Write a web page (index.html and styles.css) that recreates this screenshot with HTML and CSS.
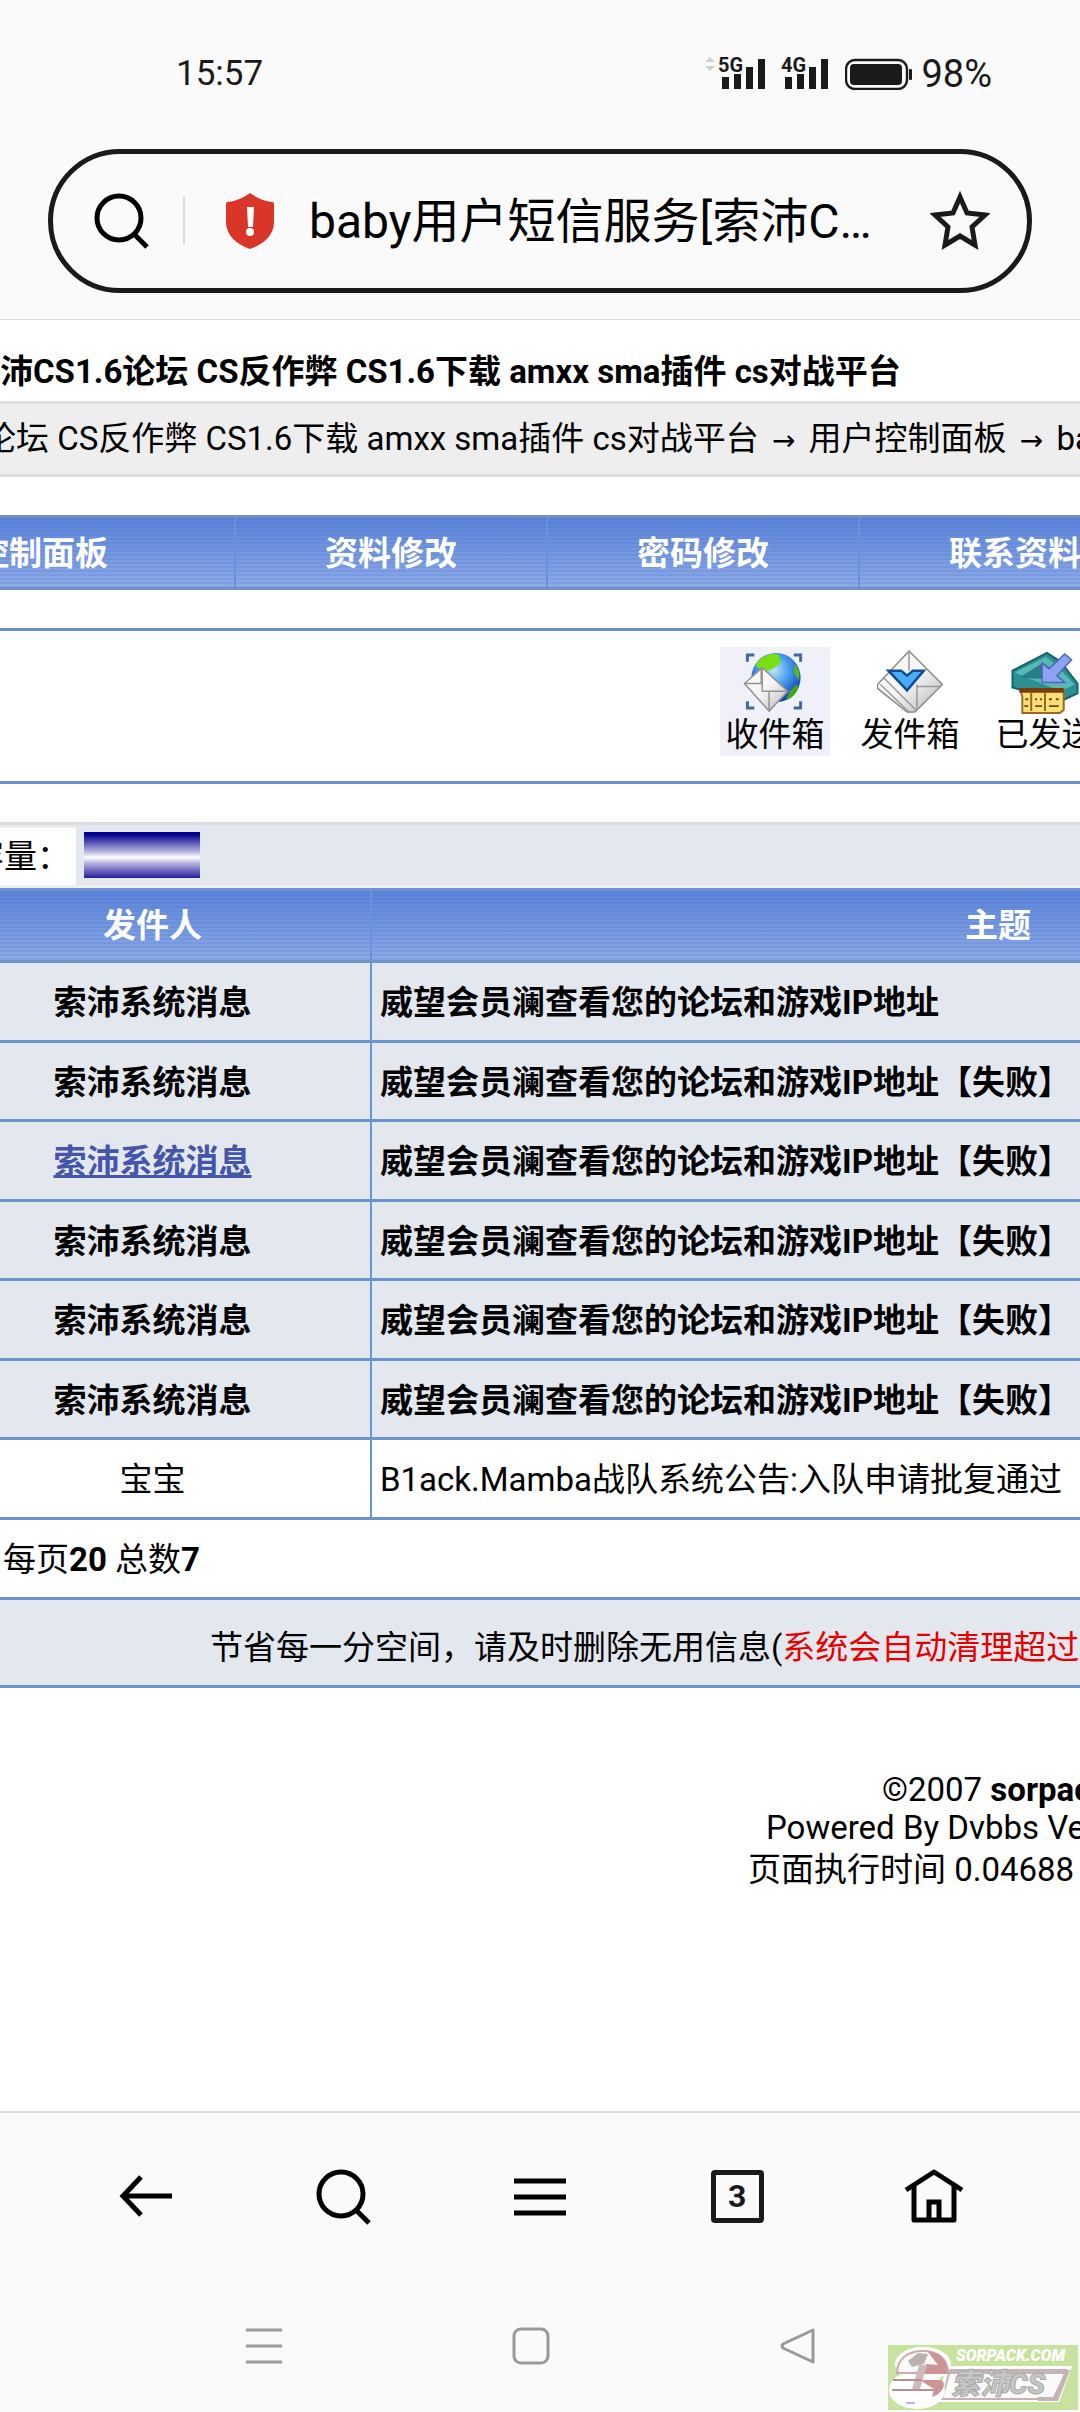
FILE: index.html
```html
<!DOCTYPE html>
<html lang="zh-CN">
<head>
    <meta charset="UTF-8">
    <meta name="viewport" content="width=device-width, initial-scale=1.0">
    <title>baby用户短信服务</title>
    <link rel="stylesheet" href="styles.css">
</head>
<body>
    <header class="browser-top">
        <div class="status-bar">
            <span class="clock">15:57</span>
            <div class="status-icons">
                <svg class="signal" width="62" height="36" viewBox="0 0 62 36">
                    <path d="M0 8l5-5 5 5zM0 12h10l-5 5z" fill="#d0d0d0"/>
                    <text x="13" y="18" class="net">5G</text>
                    <path d="M17 23h7v12h-7zM29 20h7v15h-7zM41 13h7v22h-7zM53 5h7v30h-7z" fill="#1a1a1a"/>
                </svg>
                <svg class="signal" width="50" height="36" viewBox="0 0 50 36">
                    <text x="0" y="18" class="net">4G</text>
                    <path d="M4 23h7v12h-7zM16 20h7v15h-7zM28 13h7v22h-7zM40 5h7v30h-7z" fill="#1a1a1a"/>
                </svg>
                <svg class="battery" width="68" height="36" viewBox="0 0 68 36">
                    <rect x="1" y="6" width="61" height="29" rx="9" fill="none" stroke="#1a1a1a" stroke-width="2.4"/>
                    <rect x="5" y="10" width="52" height="21" rx="4" fill="#1a1a1a"/>
                    <rect x="64" y="15" width="3" height="11" rx="1" fill="#1a1a1a"/>
                </svg>
                <span class="percent">98%</span>
            </div>
        </div>
        <form class="address-bar">
            <button type="button" class="icon-btn" aria-label="搜索">
                <svg width="56" height="56" viewBox="0 0 56 56" fill="none" stroke="#000" stroke-width="5">
                    <circle cx="25" cy="25" r="22"/>
                    <path d="M40 41l13 13"/>
                </svg>
            </button>
            <span class="divider"></span>
            <svg class="shield" width="50" height="56" viewBox="0 0 50 56">
                <path d="M25 0c7 5 14 8 22 9 2 0 2 1 2 3v17c0 13-10 22-24 27C11 51 1 42 1 29V12c0-2 0-3 2-3 8-1 15-4 22-9z" fill="#d93629"/>
                <path d="M22 14h7l-1 20h-5z" fill="#fff"/>
                <circle cx="25" cy="39" r="4" fill="#fff"/>
            </svg>
            <input class="address" type="text" aria-label="网址" value="baby用户短信服务[索沛C…" readonly>
            <button type="button" class="icon-btn" aria-label="收藏">
                <svg width="60" height="60" viewBox="0 0 60 60" fill="none" stroke="#1a1a1a" stroke-width="5">
                    <path d="M30 6l7 16 18 2-13 12 3 18-15-9-15 9 3-18L5 24l18-2z"/>
                </svg>
            </button>
        </form>
    </header>

    <main class="forum">
        <h1 class="site-title">沛CS1.6论坛 CS反作弊 CS1.6下载 amxx sma插件 cs对战平台</h1>
        <div class="crumbs">论坛 CS反作弊 CS1.6下载 amxx sma插件 cs对战平台 <span class="arrow">→</span> 用户控制面板 <span class="arrow">→</span> baby</div>

        <nav class="panel-nav">
            <a href="#" class="first">控制面板</a>
            <a href="#">资料修改</a>
            <a href="#">密码修改</a>
            <a href="#">联系资料</a>
        </nav>

        <div class="mail-boxes">
            <a href="#" class="mail-box active">
                <svg width="66" height="66" viewBox="0 0 66 66">
                    <defs>
                        <radialGradient id="globe" cx="45%" cy="35%" r="65%">
                            <stop offset="0" stop-color="#bfe4fb"/>
                            <stop offset=".45" stop-color="#4da3ee"/>
                            <stop offset="1" stop-color="#0b3fb0"/>
                        </radialGradient>
                        <linearGradient id="paper" x1="0" y1="0" x2="1" y2="1">
                            <stop offset="0" stop-color="#ffffff"/>
                            <stop offset=".5" stop-color="#f4f4f4"/>
                            <stop offset="1" stop-color="#b4b4b4"/>
                        </linearGradient>
                    </defs>
                    <path d="M5 13V6h7M52 6h7v7M59 53v7h-7M12 60H5v-7" fill="none" stroke="#41699f" stroke-width="3"/>
                    <circle cx="34" cy="29" r="25" fill="url(#globe)"/>
                    <path d="M13 17C18 8 27 3 37 6l2 8-8 6-9 3z" fill="#7ade14"/>
                    <path d="M48 43l7-7 2 3c-3 7-7 11-13 13z" fill="#42a51c"/>
                    <path d="M53 15l5 8-1 9-5-8z" fill="#52b52a"/>
                    <path d="M2 35l18-16 26 24-19 20z" fill="url(#paper)" stroke="#929292" stroke-width="1.5"/>
                    <path d="M2 35h17V19M20 43h26M27 43v20M20 19v24" fill="none" stroke="#929292" stroke-width="1.5"/>
                </svg>
                <span>收件箱</span>
            </a>
            <a href="#" class="mail-box">
                <svg width="66" height="66" viewBox="0 0 66 66">
                    <path d="M0 36l32-34 34 34-28 28h-8L0 40z" fill="url(#paper)" stroke="#888" stroke-width="1.5"/>
                    <path d="M6 29l33 33M32 2v20M40 36v26M40 38h24M3 36l30 29" fill="none" stroke="#999" stroke-width="1.5"/>
                    <path d="M11 22h13l6 5 6-5h11L30 42z" fill="#49adf4" stroke="#154a96" stroke-width="2.5"/>
                </svg>
                <span>发件箱</span>
            </a>
            <a href="#" class="mail-box">
                <svg width="68" height="66" viewBox="0 0 68 66">
                    <path d="M1 22L36 4l14 9 17 22v10l-17 8L1 39z" fill="#2c8f92" stroke="#12646c" stroke-width="2"/>
                    <path d="M3 24l32-16 10 8 19 20-14 7z" fill="#57b8b4"/>
                    <path d="M8 29l24-15 7 5v12z" fill="#277e85"/>
                    <path d="M31 14l7 6L54 5l7 6-15 16 8 7H31z" fill="#8da3f2" stroke="#5062bd" stroke-width="1.5"/>
                    <path d="M9 41h44v21l-4 3H11V49z" fill="#ffdf78" stroke="#9a6822" stroke-width="2"/>
                    <path d="M8 42h45" stroke="#7c3a08" stroke-width="5"/>
                    <path d="M20 44v19M34 44v19" stroke="#9a6822" stroke-width="2"/>
                    <path d="M14 51h3M24 51h2M29 51h2M38 51h3M45 51h3M13 58h4M24 58h7M38 58h10" stroke="#6d4a14" stroke-width="2"/>
                </svg>
                <span>已发送</span>
            </a>
        </div>

        <div class="capacity">
            <span class="capacity-label">容量：</span>
            <span class="capacity-bar"></span>
        </div>

        <table class="messages">
            <thead>
                <tr><th class="sender">发件人</th><th class="subject">主题</th></tr>
            </thead>
            <tbody>
                <tr class="unread"><td class="sender"><a href="#">索沛系统消息</a></td><td><a href="#">威望会员澜查看您的论坛和游戏IP地址</a></td></tr>
                <tr class="unread"><td class="sender"><a href="#">索沛系统消息</a></td><td><a href="#">威望会员澜查看您的论坛和游戏IP地址【失败】</a></td></tr>
                <tr class="unread"><td class="sender"><a href="#" class="hover">索沛系统消息</a></td><td><a href="#">威望会员澜查看您的论坛和游戏IP地址【失败】</a></td></tr>
                <tr class="unread"><td class="sender"><a href="#">索沛系统消息</a></td><td><a href="#">威望会员澜查看您的论坛和游戏IP地址【失败】</a></td></tr>
                <tr class="unread"><td class="sender"><a href="#">索沛系统消息</a></td><td><a href="#">威望会员澜查看您的论坛和游戏IP地址【失败】</a></td></tr>
                <tr class="unread"><td class="sender"><a href="#">索沛系统消息</a></td><td><a href="#">威望会员澜查看您的论坛和游戏IP地址【失败】</a></td></tr>
                <tr><td class="sender"><a href="#">宝宝</a></td><td><a href="#">B1ack.Mamba战队系统公告:入队申请批复通过</a></td></tr>
            </tbody>
        </table>
        <div class="paging">每页<b>20</b> 总数<b>7</b></div>
        <div class="notice">节省每一分空间，请及时删除无用信息(<span class="warn">系统会自动清理超过</span></div>

        <footer class="copyright">
            <p class="owner">©2007 <b>sorpack</b></p>
            <p class="powered">Powered By Dvbbs Version</p>
            <p class="runtime">页面执行时间 0.04688</p>
        </footer>
    </main>

    <nav class="toolbar">
        <button type="button" class="icon-btn" aria-label="后退">
            <svg width="60" height="60" viewBox="0 0 60 60" fill="none" stroke="#000" stroke-width="5">
                <path d="M56 30H7M25 11L7 30l18 19"/>
            </svg>
        </button>
        <button type="button" class="icon-btn" aria-label="搜索">
            <svg width="60" height="60" viewBox="0 0 60 60" fill="none" stroke="#000" stroke-width="5">
                <circle cx="28" cy="28" r="22"/>
                <path d="M43 44l13 13"/>
            </svg>
        </button>
        <button type="button" class="icon-btn" aria-label="菜单">
            <svg width="60" height="60" viewBox="0 0 60 60" fill="none" stroke="#000" stroke-width="5">
                <path d="M4 15h52M4 31h52M4 47h52"/>
            </svg>
        </button>
        <button type="button" class="tabs" aria-label="标签页">3</button>
        <button type="button" class="icon-btn" aria-label="主页">
            <svg width="60" height="60" viewBox="0 0 60 60" fill="none" stroke="#000" stroke-width="5">
                <path d="M2 24L30 6l28 18" stroke-linejoin="round"/>
                <path d="M10 20v34h40V20" stroke-linejoin="round"/>
                <path d="M25 54V36h10v18"/>
            </svg>
        </button>
    </nav>

    <div class="system-nav">
        <button type="button" class="icon-btn" aria-label="最近任务">
            <svg width="36" height="38" viewBox="0 0 36 38" fill="none" stroke="#999" stroke-width="3">
                <path d="M0 3h36M0 19h36M0 35h36"/>
            </svg>
        </button>
        <button type="button" class="icon-btn" aria-label="主屏幕">
            <svg width="38" height="38" viewBox="0 0 38 38" fill="none" stroke="#999" stroke-width="3">
                <rect x="2" y="2" width="34" height="34" rx="7"/>
            </svg>
        </button>
        <button type="button" class="icon-btn" aria-label="返回">
            <svg width="36" height="38" viewBox="0 0 36 38" fill="none" stroke="#999" stroke-width="3" stroke-linejoin="round">
                <path d="M33 3v32L3 21q-2-2 0-4z"/>
            </svg>
        </button>
    </div>

    <svg class="site-badge" width="190" height="65" viewBox="0 0 190 65">
        <rect width="190" height="65" fill="#c8e3a0"/>
        <path d="M58 21h126l-13 36H50z" fill="#fff"/>
        <path d="M62 25h116l-10 29H54z" fill="#fafafa" stroke="#c4b4b4" stroke-width="2"/>
        <path d="M56 25h122v4H56zM165 52l13-27h4l-12 31h-20v-4z" fill="#c4b4b4"/>
        <ellipse cx="35" cy="19" rx="28" ry="17" fill="#fff"/>
        <ellipse cx="29" cy="45" rx="28" ry="19" fill="#fff"/>
        <path d="M9 28C9 14 20 6 35 6s25 8 25 22z" fill="#fafafa" stroke="#d0a9a9" stroke-width="2"/>
        <path d="M20 16l10-8 10 1-4 10-12 3z" fill="#bdb0b0"/>
        <path d="M40 7c13 0 20 9 20 22H34l4-10 12 1z" fill="#cc9494"/>
        <path d="M31 20h8l-7 24h-8z" fill="#cdbaba"/>
        <path d="M32 35h20c8 2 3 14-8 17l2-8-8-5z" fill="#cc9494"/>
        <path d="M5 35h28M4 45h42" stroke="#b98f8f" stroke-width="2"/>
        <path d="M18 58h9" stroke="#bcb4da" stroke-width="2"/>
        <text x="68" y="16" class="badge-url">SORPACK.COM</text>
        <text x="63" y="49" class="badge-name">索沛CS</text>
    </svg>
</body>
</html>
```
FILE: styles.css
```css
* {
    box-sizing: border-box;
}

body {
    margin: 0;
    min-height: 100vh;
    display: flex;
    flex-direction: column;
    overflow-x: hidden;
    position: relative;
    background-color: #fff;
    color: #000;
    font-family: Roboto, "Noto Sans CJK SC", sans-serif;
    font-size: 33px;
    line-height: 40px;
}

a {
    color: inherit;
    text-decoration: none;
}

svg {
    display: block;
}

.icon-btn {
    display: flex;
    justify-content: center;
    align-items: center;
    padding: 0;
    border: none;
    background: none;
    cursor: pointer;
}

/* Browser header */
.browser-top {
    padding-bottom: 26px;
    background-color: #fafafa;
    border-bottom: 1px solid #dcdcdc;
}

.status-bar {
    display: flex;
    justify-content: space-between;
    align-items: center;
    height: 149px;
    padding: 0 88px 2px 176px;
    color: #1a1a1a;
    font-size: 35px;
}

.status-icons {
    display: flex;
    align-items: center;
    gap: 14px;
}

.signal,
.battery {
    margin-top: -4px;
}

.percent {
    margin-left: -6px;
    font-size: 38px;
}

.net {
    font-size: 20px;
    font-weight: bold;
    fill: #1a1a1a;
}

.address-bar {
    display: flex;
    align-items: center;
    height: 144px;
    margin: 0 48px;
    padding: 0 37px 0 41px;
    border: 5px solid #1a1a1a;
    border-radius: 72px;
}

.divider {
    width: 2px;
    height: 48px;
    margin: 0 40px 0 33px;
    background-color: #dedede;
}

.address {
    flex: 1;
    min-width: 0;
    margin-left: 34px;
    padding: 2px 0 0;
    border: none;
    outline: none;
    background: none;
    font-family: inherit;
    font-size: 48px;
    line-height: 64px;
}

/* Forum page */
.forum {
    flex: 1;
    overflow: hidden;
    white-space: nowrap;
}

.site-title {
    margin: 0;
    padding: 32px 0 9px;
    font-size: 33px;
    line-height: 40px;
}

.crumbs {
    height: 76px;
    padding-top: 15px;
    border-top: 3px solid #ddd;
    border-bottom: 3px solid #ddd;
    background-color: #eee;
    text-indent: -17px;
}

.arrow {
    margin: 0 5px;
    font-family: "DejaVu Sans", sans-serif;
    font-size: 28px;
    line-height: 1;
}

.panel-nav,
.messages thead tr {
    background-image:
        repeating-linear-gradient(rgba(50, 90, 190, 0.12) 0 2px, transparent 2px 4px),
        linear-gradient(#5a83d8, #8eabe8);
    color: #fff;
    font-weight: bold;
}

.panel-nav {
    display: flex;
    height: 75px;
    margin-top: 38px;
    border-top: 3px solid #6f90c8;
    border-bottom: 3px solid #6f90c8;
}

.panel-nav a {
    flex: 0 0 312px;
    padding-top: 16px;
    border-right: 2px solid #6595d6;
    text-align: center;
}

.panel-nav .first {
    flex-basis: 236px;
    min-width: 0;
    display: flex;
    justify-content: flex-end;
    padding-right: 126px;
}

.mail-boxes {
    display: flex;
    gap: 25px;
    margin-top: 38px;
    padding: 16px 0 25px 720px;
    border-top: 3px solid #6b90c8;
    border-bottom: 3px solid #6b90c8;
}

.mail-box {
    flex: 0 0 110px;
    display: flex;
    flex-direction: column;
    align-items: center;
    height: 109px;
    padding-top: 2px;
    line-height: 42px;
}

.mail-box.active {
    background-color: #f0f0f8;
}

.capacity {
    display: flex;
    align-items: center;
    height: 66px;
    margin-top: 38px;
    border-top: 3px solid #ddd;
    border-bottom: 3px solid #eee;
    background-color: #e3e7ee;
}

.capacity-label {
    display: flex;
    justify-content: flex-end;
    width: 76px;
    padding: 9px 6px 8px 0;
    border-top: 2px solid #eee;
    background-color: #fff;
}

.capacity-bar {
    width: 116px;
    height: 46px;
    margin-left: 8px;
    background-image: linear-gradient(#00008c 5%, #b5b1e0 42%, #fff 55%, #b5b1e0 68%, #241d9c);
}

.messages {
    width: 100%;
    table-layout: fixed;
    border-collapse: collapse;
}

.messages th,
.messages td {
    padding: 3px 0 0 8px;
    border-bottom: 3px solid #6b93cc;
    text-align: left;
}

.messages th {
    height: 72px;
    padding-top: 0;
    border-top: 3px solid #6b93cc;
}

.messages td {
    height: 79px;
}

.messages tr:nth-child(odd) td {
    height: 80px;
}

.messages .sender {
    width: 371px;
    padding-left: 0;
    padding-right: 65px;
    border-right: 2px solid #6595d6;
    text-align: center;
}

.messages .subject {
    padding-left: 544px;
    text-align: center;
}

.unread {
    background-color: #e3e7ee;
    font-weight: bold;
}

.messages .hover {
    color: #4455aa;
    text-decoration: underline;
}

.paging {
    height: 80px;
    padding: 20px 0 0 3px;
    border-bottom: 3px solid #6b93cc;
}

.notice {
    height: 88px;
    padding: 28px 0 0 210px;
    border-bottom: 3px solid #6b93cc;
    background-color: #e3e7ee;
}

.warn {
    color: #e60000;
}

.copyright {
    padding-top: 83px;
    line-height: 38px;
}

.copyright p {
    margin: 0;
}

.copyright .owner {
    padding-left: 882px;
}

.copyright .powered {
    padding-left: 766px;
}

.copyright .runtime {
    padding: 4px 0 0 748px;
}

/* Browser toolbar */
.toolbar {
    display: flex;
    align-items: center;
    height: 172px;
    padding: 0 47px 4px;
    border-top: 2px solid #dcdcdc;
    background-color: #fafafa;
}

.toolbar .icon-btn {
    flex: 1;
}

.tabs {
    width: 53px;
    height: 53px;
    margin: 0 72px;
    padding: 0;
    border: 5px solid #1a1a1a;
    border-radius: 4px;
    background: none;
    color: #1a1a1a;
    font-family: inherit;
    font-size: 32px;
    font-weight: bold;
    line-height: 43px;
}

.system-nav {
    display: flex;
    justify-content: space-between;
    height: 129px;
    padding: 44px 264px 0 246px;
    align-items: flex-start;
    background-color: #fafafa;
}

/* Site watermark over the corner */
.site-badge {
    position: absolute;
    right: 2px;
    bottom: 2px;
}

.badge-url {
    fill: #fff;
    font-size: 16px;
    font-style: italic;
    font-weight: 900;
}

.badge-name {
    fill: #c6c6c6;
    stroke: #aaa;
    font-size: 29px;
    font-style: italic;
    font-weight: 900;
}
```
